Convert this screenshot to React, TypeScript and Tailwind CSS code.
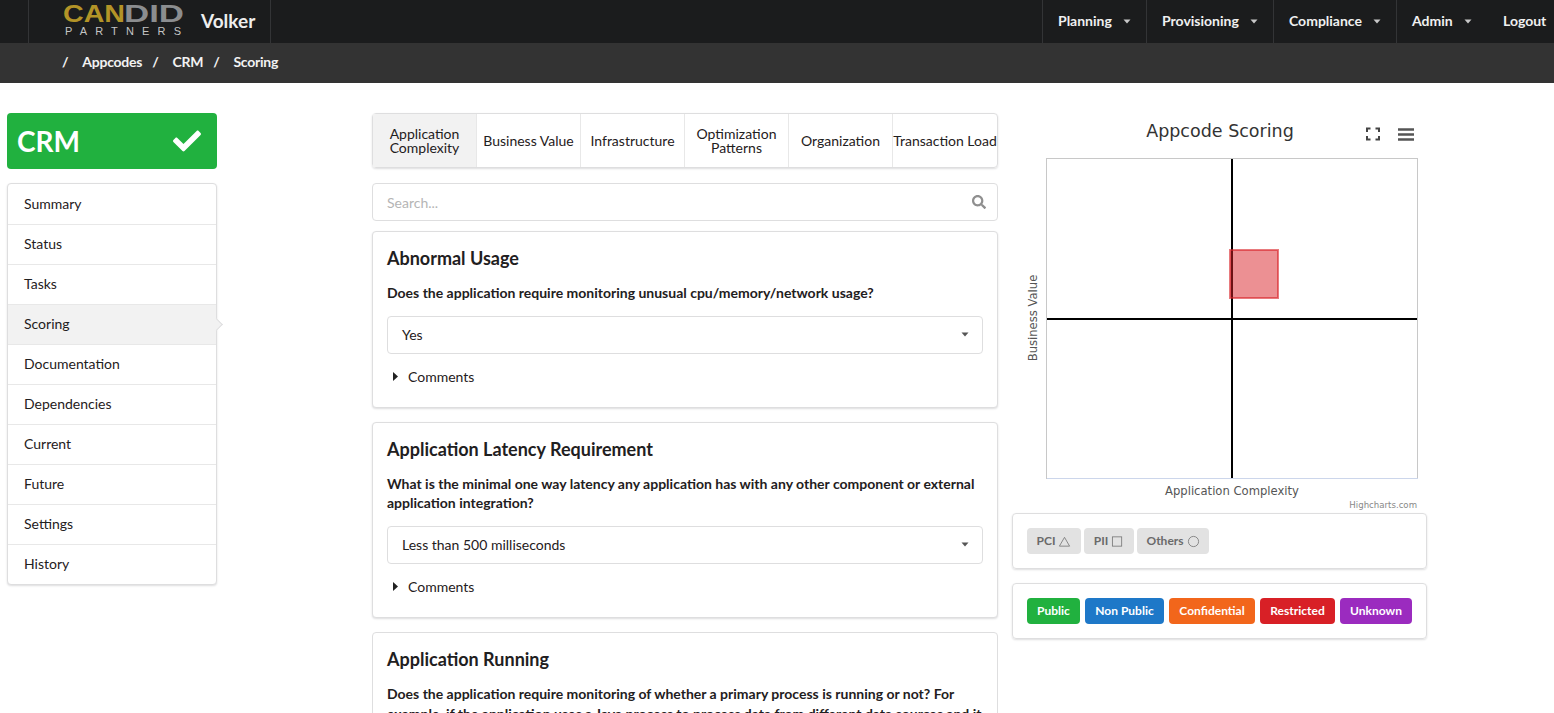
import { FaCheck, FaSearch } from "react-icons/fa";

const navItems = [
  { label: "Planning", w: "w-[104px]" },
  { label: "Provisioning", w: "w-[127px]" },
  { label: "Compliance", w: "w-[123px]" },
  { label: "Admin", w: "w-[91px]" },
];

const menu = ["Summary", "Status", "Tasks", "Scoring", "Documentation", "Dependencies", "Current", "Future", "Settings", "History"];

const tabs: [string, boolean][] = [
  ["Application Complexity", true],
  ["Business Value", false],
  ["Infrastructure", false],
  ["Optimization Patterns", false],
  ["Organization", false],
  ["Transaction Load", false],
];

function Caret({ className }: { className: string }) {
  return (
    <svg viewBox="0 0 8 5" className={className} aria-hidden="true">
      <path d="M0.500 0.500h7L4 4.500z" fill="currentColor" />
    </svg>
  );
}

function Logo() {
  const face = { fontFamily: "'Liberation Sans', sans-serif" };
  return (
    <svg width="122" height="43" viewBox="0 0 122 43" className="ml-[34px] block shrink-0" aria-label="Candid Partners">
      <text x="0" y="22" fontSize="24" textLength="62" lengthAdjust="spacingAndGlyphs" style={{ ...face, fill: "#b39427" }}>CAN</text>
      <text x="61" y="22" fontSize="24" textLength="60" lengthAdjust="spacingAndGlyphs" style={{ ...face, fill: "#8b8d8f" }}>DID</text>
      <text x="2" y="35" fontSize="11" fontWeight="400" textLength="116" style={{ ...face, fill: "#c4c4c4" }}>PARTNERS</text>
    </svg>
  );
}

function Question({ title, question, answer, className }: { title: string; question: string; answer: string; className: string }) {
  return (
    <section className={`shrink-0 rounded-[4px] border border-[#dededf] bg-white px-[14px] shadow-[0_1px_2px_rgba(34,36,38,0.15)] ${className}`}>
      <h2 className="mt-[13px] text-[18px] leading-[26px] font-bold text-[#1f2021]">{title}</h2>
      <p className="mt-[12px] text-[14px] leading-[19.200px] font-bold text-[#1f2021]">{question}</p>
      <div className="mt-[13.800px] flex h-[38px] items-center justify-between rounded-[4px] border border-[#dededf] pr-[13px] pb-[1px] pl-[14px] text-[14px] text-[#1f2021]">
        <span>{answer}</span>
        <Caret className="h-[5px] w-[8px] text-[#555]" />
      </div>
      <div className="mt-[12px] flex h-[20px] items-center text-[14px] text-[#1f2021]">
        <svg viewBox="0 0 5 9" className="mr-[10px] ml-[6px] h-[9px] w-[5px]" aria-hidden="true">
          <path d="M0 0v9L5 4.500z" fill="#222" />
        </svg>
        Comments
      </div>
    </section>
  );
}

function Chart() {
  const label = { fontFamily: "'DejaVu Sans', sans-serif", fill: "#555" };
  return (
    <svg width="415" height="400" viewBox="1012 113 415 400" className="block">
      <text x="1220" y="137" textAnchor="middle" fontSize="17.500" style={{ fontFamily: "'DejaVu Sans', sans-serif", fill: "#333" }}>Appcode Scoring</text>
      <g stroke="#444" strokeWidth="2" fill="none">
        <path d="M1367 132v-3.500h3.500M1375.500 128.500h3.500v3.500M1379 136v3.500h-3.500M1370.500 139.500h-3.500v-3.500" />
      </g>
      <path d="M1398 129.500h16M1398 134.500h16M1398 139.500h16" stroke="#555" strokeWidth="2.500" />
      <rect x="1046.500" y="158.500" width="371" height="320" fill="#fff" stroke="#c8c8c8" />
      <path d="M1047 478.500h371" stroke="#ccd6eb" />
      <path d="M1232 159v319M1047 319h370" stroke="#000" strokeWidth="2" />
      <rect x="1230" y="250" width="48" height="48" fill="rgba(217,33,39,0.5)" stroke="rgba(217,33,39,0.6)" strokeWidth="2" />
      <text x="1232" y="495" textAnchor="middle" fontSize="11.600" style={label}>Application Complexity</text>
      <text x="1037" y="318" textAnchor="middle" fontSize="11.600" transform="rotate(-90 1037 318)" style={label}>Business Value</text>
      <text x="1417" y="508" textAnchor="end" fontSize="8.600" style={{ fontFamily: "'DejaVu Sans', sans-serif", fill: "#888" }}>Highcharts.com</text>
    </svg>
  );
}

const shapes = [
  { label: "PCI", w: "w-[54px]", shape: <path d="M1.500 11.500 L7 2 L12.500 11.500z" /> },
  { label: "PII", w: "w-[50px]", shape: <rect x="1.500" y="1.500" width="10" height="10" /> },
  { label: "Others", w: "w-[72px]", shape: <circle cx="7" cy="6.500" r="5.500" /> },
];

const classes = [
  ["Public", "bg-[#21b13f] w-[53px]"],
  ["Non Public", "bg-[#1e78c8] w-[79px]"],
  ["Confidential", "bg-[#f2661b] w-[86px]"],
  ["Restricted", "bg-[#d82026] w-[75px]"],
  ["Unknown", "bg-[#9b2bbf] w-[72px]"],
];

export default function App() {
  return (
    <div className="h-[713px] w-[1554px] overflow-hidden bg-white font-['Lato','Noto_Sans',sans-serif] text-[#1f2021]">
      <header className="flex h-[43px] items-center justify-between bg-[#1b1c1d] text-[14px] font-bold text-[#f0f0f0]">
        <div className="ml-[28px] flex h-full w-[243px] items-center border-x border-[#333436]">
          <Logo />
          <span className="ml-[16px] text-[19px] text-[#eeeeee]">Volker</span>
        </div>
        <nav className="flex h-full items-center">
          {navItems.map((item) => (
            <div key={item.label} className={`flex h-full items-center border-l border-[#333436] pb-[2px] pl-[15px] ${item.w}`}>
              {item.label}
              <Caret className="mt-[1px] ml-[11px] h-[5px] w-[8px] text-[#c8c8c8]" />
            </div>
          ))}
          <div className="flex h-full w-[67px] items-center pb-[2px] pl-[16px]">Logout</div>
        </nav>
      </header>

      <div className="flex h-[40px] items-center bg-[#333333] pb-[3px] pl-[62px] text-[14px] font-bold tracking-[-0.25px] text-[#f2f2f2]">
        <span className="mr-[14px]">/</span>
        <span>Appcodes</span>
        <span className="mr-[14px] ml-[10px]">/</span>
        <span>CRM</span>
        <span className="mr-[14px] ml-[10px]">/</span>
        <span>Scoring</span>
      </div>

      <main className="flex items-start pt-[30px] pl-[7px]">
        <aside className="w-[210px] shrink-0">
          <div className="flex h-[56px] items-center justify-between rounded-[4px] bg-[#21b13f] pr-[16px] pl-[10px] text-white">
            <span className="text-[28px] leading-none font-bold">CRM</span>
            <FaCheck size={28} />
          </div>
          <ul className="mt-[14px] rounded-[4px] border border-[#dededf] bg-white text-[14px] text-[#1f2021] shadow-[0_1px_2px_rgba(34,36,38,0.15)]">
            {menu.map((item, i) => {
              const active = item === "Scoring";
              return (
                <li key={item} className={`relative flex h-[40px] items-center pb-[2px] pl-[16px] ${i ? "border-t border-[#e8e8e8]" : ""} ${active ? "bg-[#f2f2f2]" : ""}`}>
                  {item}
                  {active && <span className="absolute top-[15px] right-[-5px] h-[9px] w-[9px] rotate-45 border-t border-r border-[#dededf] bg-[#f2f2f2]" />}
                </li>
              );
            })}
          </ul>
        </aside>

        <div className="ml-[155px] flex w-[626px] shrink-0 flex-col">
          <div className="flex h-[55px] rounded-[4px] border border-[#dededf] text-center text-[14px] leading-[14px] text-[#1f2021] shadow-[0_1px_2px_rgba(34,36,38,0.15)]">
            {tabs.map(([t, active], i) => (
              <div key={t} className={`flex h-full shrink-0 items-center justify-center ${i === 5 ? "w-[105px] border-l border-[#e8e8e8] whitespace-nowrap" : i ? "w-[104px] border-l border-[#e8e8e8] px-[2px]" : "w-[103px] px-[12px]"} ${active ? "bg-[#f2f2f2]" : ""}`}>
                {t}
              </div>
            ))}
          </div>
          <div className="mt-[15px] flex h-[38px] items-center justify-between rounded-[4px] border border-[#dededf] pr-[11px] pl-[14px] text-[14px] text-[#b5b5b5]">
            <span>Search...</span>
            <FaSearch size={14} className="text-[#8f8f8f]" />
          </div>
          <Question className="mt-[10px] h-[177px]" title="Abnormal Usage" question="Does the application require monitoring unusual cpu/memory/network usage?" answer="Yes" />
          <Question className="mt-[14px] h-[196px]" title="Application Latency Requirement" question="What is the minimal one way latency any application has with any other component or external application integration?" answer="Less than 500 milliseconds" />
          <section className="mt-[14px] h-[200px] shrink-0 rounded-[4px] border border-[#dededf] bg-white px-[14px]">
            <h2 className="mt-[13px] text-[18px] leading-[26px] font-bold">Application Running</h2>
            <p className="mt-[12px] text-[14px] leading-[19.600px] font-bold">Does the application require monitoring of whether a primary process is running or not? For example, if the application uses a Java process to process data from different data sources and it</p>
          </section>
        </div>

        <div className="ml-[14px] w-[415px] shrink-0">
          <Chart />
          <div className="flex h-[56px] items-center gap-[3px] rounded-[4px] border border-[#dededf] pl-[14px] shadow-[0_1px_2px_rgba(34,36,38,0.15)]">
            {shapes.map(({ label, w, shape }) => (
              <span key={label} className={`flex h-[26px] items-center justify-center gap-[3px] rounded-[4px] bg-[#e2e2e2] text-[12px] font-bold text-[#6a6a6a] ${w}`}>
                {label}
                <svg viewBox="0 0 14 13" className="h-[13px] w-[13px]" fill="none" stroke="#777" strokeWidth="0.900">{shape}</svg>
              </span>
            ))}
          </div>
          <div className="mt-[14px] flex h-[56px] items-center gap-[5px] rounded-[4px] border border-[#dededf] pl-[14px] shadow-[0_1px_2px_rgba(34,36,38,0.15)]">
            {classes.map(([label, bg]) => (
              <span key={label} className={`flex h-[26px] items-center justify-center rounded-[4px] text-[12px] font-bold text-white ${bg}`}>{label}</span>
            ))}
          </div>
        </div>
      </main>
    </div>
  );
}
